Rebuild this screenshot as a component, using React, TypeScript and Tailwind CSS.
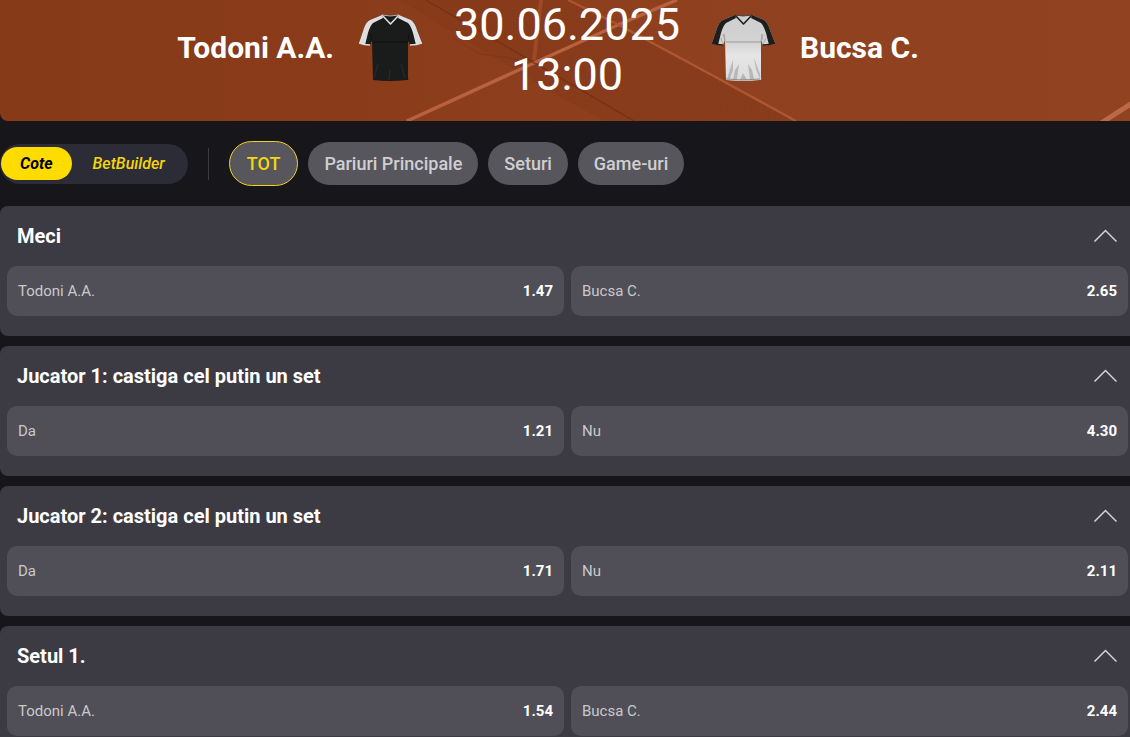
import { useState } from "react";
import { clsx } from "clsx";

type Outcome = { label: string; odds: string };
type MarketData = { title: string; outcomes: Outcome[] };

const filters = ["TOT", "Pariuri Principale", "Seturi", "Game-uri"];

const markets: MarketData[] = [
  {
    title: "Meci",
    outcomes: [
      { label: "Todoni A.A.", odds: "1.47" },
      { label: "Bucsa C.", odds: "2.65" },
    ],
  },
  {
    title: "Jucator 1: castiga cel putin un set",
    outcomes: [
      { label: "Da", odds: "1.21" },
      { label: "Nu", odds: "4.30" },
    ],
  },
  {
    title: "Jucator 2: castiga cel putin un set",
    outcomes: [
      { label: "Da", odds: "1.71" },
      { label: "Nu", odds: "2.11" },
    ],
  },
  {
    title: "Setul 1.",
    outcomes: [
      { label: "Todoni A.A.", odds: "1.54" },
      { label: "Bucsa C.", odds: "2.44" },
    ],
  },
];

function Court() {
  return (
    <svg
      className="absolute inset-0 w-full h-full"
      viewBox="0 0 1130 121"
      preserveAspectRatio="xMidYMax slice"
      aria-hidden="true"
    >
      <defs>
        <linearGradient id="clay" x1="0" x2="1" y1="0" y2="0">
          <stop offset="0" stopColor="#863a18" />
          <stop offset="0.35" stopColor="#8b3c1a" />
          <stop offset="0.6" stopColor="#8f401f" />
          <stop offset="1" stopColor="#914221" />
        </linearGradient>
        <pattern id="net" width="3" height="3" patternUnits="userSpaceOnUse">
          <path d="M0 0L3 1.5M1 0V3" stroke="#6f2c11" strokeWidth="0.5" opacity="0.35" />
        </pattern>
      </defs>
      <rect width="1130" height="121" fill="url(#clay)" />
      <path d="M430 0H572L795 121H634L533 62Z" fill="#85381a" opacity="0.3" />
      <path d="M430 0H572L795 121H634L533 62Z" fill="url(#net)" />
      <path d="M400 0L560 97L605 121H634L533 62L426 0Z" fill="#7b3414" opacity="0.25" />
      <path d="M407 121L534 63L620 24L677 0" fill="none" stroke="#b8613e" strokeWidth="3.5" />
      <path d="M568 0L617 24" stroke="#a9542f" strokeWidth="2.5" />
      <path d="M617 24L710 74L796 121" fill="none" stroke="#ac5633" strokeWidth="2.5" />
      <path d="M541 0L534 60" stroke="#9d4826" strokeWidth="4" />
      <path d="M426 0L533 62L634 121" fill="none" stroke="#6b2c12" strokeWidth="1.2" opacity="0.7" />
      <path d="M452 37L480 54L505 57L537 64" fill="none" stroke="#6b2c12" strokeWidth="1" opacity="0.3" />
      <path d="M1101 123L1134 102" stroke="#bd6847" strokeWidth="5" />
    </svg>
  );
}

function Jersey({ dark = false }: { dark?: boolean }) {
  const body = dark ? "#1a1b1b" : "url(#shirt-light)";
  const sleeve = dark ? "#dedede" : "#1e1e1e";
  const seam = dark ? "#0c0d0d" : "#8d8d8d";

  return (
    <svg width="63" height="68" viewBox="0 0 63 68" className="shrink-0" aria-hidden="true">
      <defs>
        <linearGradient id="shirt-light" x1="0" x2="0" y1="0" y2="1">
          <stop offset="0" stopColor="#cfcfcf" />
          <stop offset="0.4" stopColor="#d2d2d2" />
          <stop offset="0.6" stopColor="#e6e6e6" />
          <stop offset="1" stopColor="#dcdcdc" />
        </linearGradient>
      </defs>
      <path
        d="M23 1Q31 3 40 1L52 6Q56 9 58 16L63 29Q58 32 51 31L49 26V64Q50 66 48 66Q31 68 14 66L13 26L11 31Q5 32 0 29L5 14Q7 8 11 6Z"
        fill={body}
      />
      <path d="M23 1L11 6Q7 8 5 14L0 29L6 31L9 19Q11 12 14 9L24 4Z" fill={sleeve} />
      <path d="M40 1L52 6Q56 9 58 16L63 29L57 31L54 19Q52 12 49 9L39 4Z" fill={sleeve} />
      <path d="M0 29Q5 31 11 31M63 29Q58 31 51 31" fill="none" stroke={sleeve} strokeWidth="1.5" />
      <path d="M23 1L31.5 10L40 1" fill="none" stroke={sleeve} strokeWidth="1.6" strokeLinejoin="round" />
      <path d="M23 1Q31 3 40 1" fill="none" stroke={dark ? "#a8aca8" : "#444444"} strokeWidth="1" />
      <path d="M14 28H49" stroke={seam} strokeWidth="0.8" />
      <path d="M13 28L12 20M49 28L50 20" stroke={seam} strokeWidth="0.7" />
      {dark ? (
        <path d="M19 50L15 64M31 56L30 66M42 50L46 64" stroke="#262828" strokeWidth="1.5" />
      ) : (
        <>
          <path d="M21 46L18 55L15 65H18L21 56ZM27 50L23 56L21 65H25ZM31 59L28 66H35ZM36 50L38 65H42L40 56ZM42 44L44 55L48 65V60Z" fill="#a3a3a3" opacity="0.65" />
          <path d="M14 65Q31 67 48 65" fill="none" stroke="#777777" strokeWidth="0.8" />
          <path d="M9 24L11 30M54 24L51 30M11 20L13 26M51 20L50 26" stroke="#999999" strokeWidth="0.7" />
        </>
      )}
    </svg>
  );
}

function MatchHeader() {
  return (
    <header className="relative overflow-hidden rounded-bl-lg text-white">
      <Court />
      <div className="relative grid grid-cols-[1fr_auto_1fr] items-center gap-[25px] pb-[21px] pl-1">
        <div className="flex items-center justify-end gap-[25px] pb-1">
          <h2 className="text-[30px] leading-9 font-bold">Todoni A.A.</h2>
          <Jersey dark />
        </div>
        <time dateTime="2025-06-30T13:00" className="block w-60 text-center text-[45px] leading-[50px]">
          30.06.2025 13:00
        </time>
        <div className="flex items-center gap-[25px] pb-1">
          <Jersey />
          <h2 className="text-[30px] leading-9 font-bold">Bucsa C.</h2>
        </div>
      </div>
    </header>
  );
}

function Market({ title, outcomes }: MarketData) {
  const [open, setOpen] = useState(true);

  return (
    <section className="rounded-l-lg bg-[#3c3b44] pb-5">
      <h3>
        <button
          type="button"
          aria-expanded={open}
          onClick={() => setOpen(!open)}
          className="flex w-full items-center justify-between h-[60px] pl-[17px] pr-[13px] text-xl font-bold text-white"
        >
          {title}
          <svg
            width="24"
            height="14"
            viewBox="0 0 24 14"
            fill="none"
            stroke="#d4d4d6"
            strokeWidth="1.5"
            className={clsx(!open && "rotate-180")}
            aria-hidden="true"
          >
            <path d="M1.5 12.5L12.5 1.5L23.5 12.5" />
          </svg>
        </button>
      </h3>
      {open && (
        <div className="grid grid-cols-2 gap-[7px] pl-[7px] pr-0.5">
          {outcomes.map((outcome) => (
            <button
              key={outcome.label}
              type="button"
              className="flex h-[50px] items-center justify-between rounded-[10px] bg-[#504f57] px-[11px] text-[15px]"
            >
              <span className="text-[#c9c9cc]">{outcome.label}</span>
              <span className="font-bold text-white">{outcome.odds}</span>
            </button>
          ))}
        </div>
      )}
    </section>
  );
}

export default function App() {
  const [mode, setMode] = useState("Cote");
  const [filter, setFilter] = useState("TOT");

  return (
    <div className="min-h-screen bg-[#17161b] font-[Roboto,sans-serif]">
      <MatchHeader />
      <nav className="flex items-center h-[85px]">
        <div className="flex h-10 items-center rounded-full bg-[#2c2c37] pl-px pr-0.5">
          {["Cote", "BetBuilder"].map((item) => (
            <button
              key={item}
              type="button"
              onClick={() => setMode(item)}
              className={clsx(
                "h-[33px] rounded-full text-base italic",
                item === mode ? "bg-[#ffdc00] px-[19px] font-bold text-black" : "px-[21px] font-medium text-[#f5d60f]"
              )}
            >
              {item}
            </button>
          ))}
        </div>
        <div className="mx-5 h-8 w-px bg-[#3a3a41]" />
        <div className="flex items-center gap-2.5">
          {filters.map((item) => (
            <button
              key={item}
              type="button"
              onClick={() => setFilter(item)}
              className={clsx(
                "rounded-full bg-[#57565d] text-lg font-medium",
                item === filter
                  ? "h-[45px] border border-[#f0d21c] px-[17px] text-[#f5d60f]"
                  : "h-[43px] px-4 text-[#cfcfd2]"
              )}
            >
              {item}
            </button>
          ))}
        </div>
      </nav>
      <main className="flex flex-col gap-2.5">
        {markets.map((market) => (
          <Market key={market.title} {...market} />
        ))}
      </main>
    </div>
  );
}
